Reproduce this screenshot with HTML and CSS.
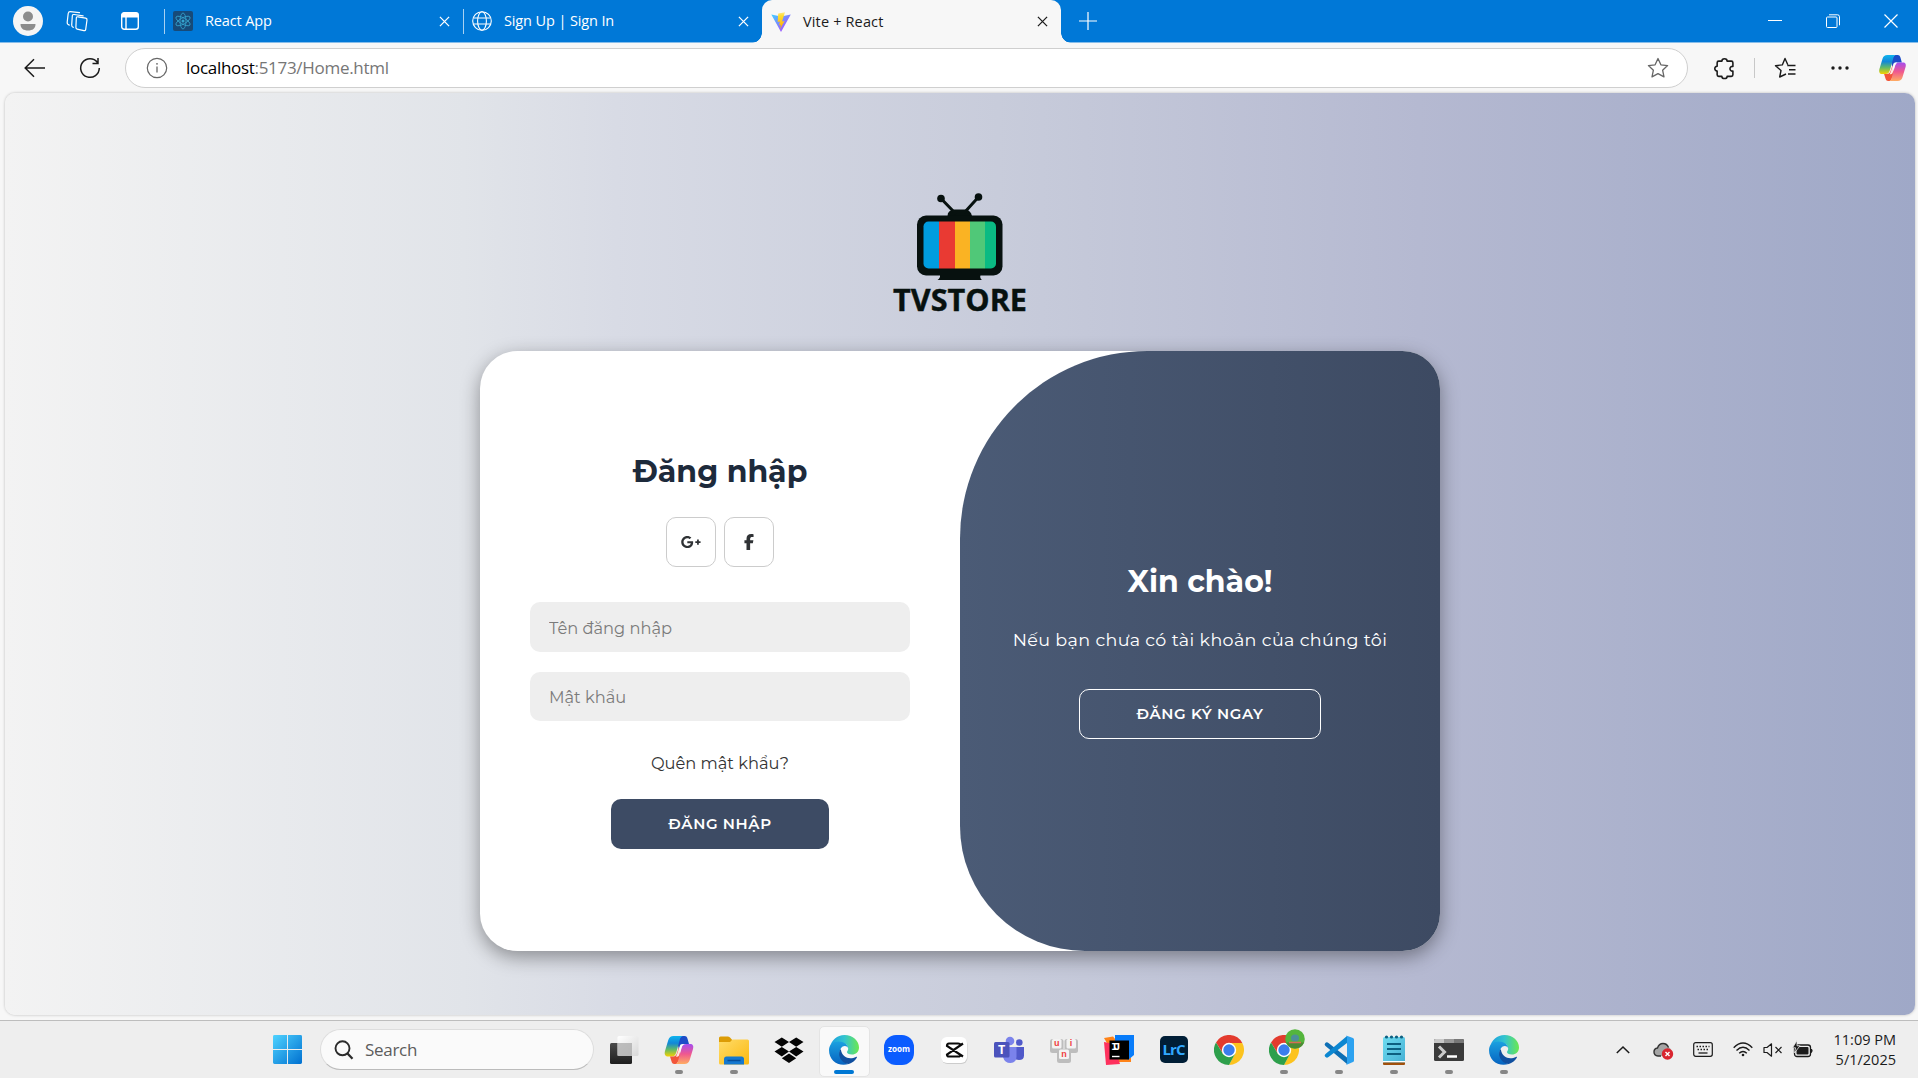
FILE: index.html
```html
<!DOCTYPE html>
<html lang="vi">
<head>
<meta charset="utf-8">
<title>Vite + React</title>
<link rel="stylesheet" href="styles.css">
</head>
<body>
<svg class="defs" aria-hidden="true">
  <defs>
    <linearGradient id="cpA" x1="0" y1="0" x2="0" y2="1"><stop offset="0" stop-color="#0fb5ee"/><stop offset=".35" stop-color="#1287d8"/><stop offset=".65" stop-color="#5fb96a"/><stop offset="1" stop-color="#f7d200"/></linearGradient>
    <linearGradient id="cpB" x1="0" y1="0" x2="0" y2="1"><stop offset="0" stop-color="#a44df0"/><stop offset=".5" stop-color="#f0588f"/><stop offset="1" stop-color="#ffad62"/></linearGradient>
    <linearGradient id="edA" x1="0" y1="0" x2="1" y2="0"><stop offset="0" stop-color="#1b9de2"/><stop offset=".5" stop-color="#33c4cf"/><stop offset="1" stop-color="#6be84f"/></linearGradient>
    <linearGradient id="edB" x1="0" y1="0" x2="0" y2="1"><stop offset="0" stop-color="#1ba0e0"/><stop offset="1" stop-color="#0663c0"/></linearGradient>
    <linearGradient id="winG" x1="0" y1="0" x2="1" y2="1"><stop offset="0" stop-color="#4fd3ff"/><stop offset="1" stop-color="#0070d0"/></linearGradient>
    <linearGradient id="viA" x1="0" y1="0" x2="1" y2="1"><stop offset="0" stop-color="#41d1ff"/><stop offset="1" stop-color="#bd34fe"/></linearGradient>
    <linearGradient id="viB" x1="0" y1="0" x2="0" y2="1"><stop offset="0" stop-color="#ffea83"/><stop offset=".2" stop-color="#ffdd35"/><stop offset="1" stop-color="#ffa800"/></linearGradient>
    <linearGradient id="foG" x1="0" y1="0" x2="1" y2="1"><stop offset="0" stop-color="#ffdc6a"/><stop offset="1" stop-color="#fbb910"/></linearGradient>
    <linearGradient id="noG" x1="0" y1="0" x2="1" y2="1"><stop offset="0" stop-color="#6fdcf0"/><stop offset="1" stop-color="#45b0d4"/></linearGradient>
    <linearGradient id="tvDark" x1="0" y1="0" x2="0" y2="1"><stop offset="0" stop-color="#4a4a4a"/><stop offset="1" stop-color="#1e1e1e"/></linearGradient>
    <linearGradient id="tvLite" x1="0" y1="0" x2="1" y2="1"><stop offset="0" stop-color="#fff"/><stop offset="1" stop-color="#d8d8d8"/></linearGradient>
    <symbol id="close" viewBox="0 0 12 12"><path d="M1 1l10 10M11 1L1 11" fill="none" stroke="currentColor" stroke-width="1.4"/></symbol>
    <symbol id="copilot" viewBox="0 0 30 30">
      <path d="M17.500 1h3c2 0 2.600 1.200 3.100 3L25 9h-5c-2.500 0-3.500 1-4.200 3.200L15 15 13 6z" fill="#1c4cc8"/>
      <path d="M9.500 1h9.500c-2 .3-2.600 1.500-3.100 3.300L12.400 17c-.9 3-2 4.500-4.900 4.500H4C1 21.500.2 19 1 16L4.300 5C5.200 2.200 6.700 1 9.500 1z" fill="url(#cpA)"/>
      <path d="M12.500 29h-2c-2 0-2.600-1.300-3.100-3L6 21.500h3c2.500 0 3.400-1.500 4.200-4L15 12l2 10z" fill="#f2553a"/>
      <path d="M20.500 29H11c2-.3 2.600-1.500 3.100-3.300L17.600 13c.9-3 2-4 4.900-4H26c3 0 3.800 2 3 5l-3.300 11c-.9 2.800-2.400 4-5.200 4z" fill="url(#cpB)"/>
      <path d="M16.200 9.800Q17.500 8.800 20 9q-1.800.8-2.500 3.500L15 20.500q-.8 1.500-3 1.200 .8-1.700 1.300-3.200z" fill="#fff" opacity=".85"/>
    </symbol>
    <symbol id="edge" viewBox="0 0 30 30">
      <path d="M1 12C2.500 5 8 0 15.500 0 24 0 30 6 30 12.500c0 4.500-3.300 7-7 7-3.500 0-5-1.300-5-2.500 0-.8 1.200-1.300 1.200-3.500C19.200 9 14 7.500 10 7.500 5.500 7.500 2.500 9.500 1 12z" fill="url(#edA)"/>
      <path d="M0 15C0 9.500 4.500 6.500 9.500 6.500c5.500 0 9.700 3.300 9.700 7-.2-1.400-1.600-2.500-3.400-2.500-3.200 0-5 3-5 6.500 0 6 4.500 10.500 9 11.500C9 32 0 25.500 0 15z" fill="url(#edB)"/>
      <path d="M11.800 14c-1.600 2-2 4.500-1.400 7 1 4.300 4.700 7.700 9.400 8 3.200-1 6-3.200 8-6.300.4-.7-.2-1.200-.9-.8-5.400 2.800-14 1.600-15.100-7.900z" fill="#104f9f"/>
    </symbol>
    <symbol id="chrome" viewBox="0 0 30 30">
      <path d="M15 8h13.300A15 15 0 0 1 15 30l6-11.500z" fill="#fcc31e"/>
      <path d="M2 7.500A15 15 0 0 1 28.300 8H15l-6.200 10.500z" fill="#e33b2e"/>
      <path d="M2 7.500l6.900 11.200L15 22l6.200-3.500L15 30A15 15 0 0 1 2 7.500z" fill="#2d9f4b"/>
      <circle cx="15" cy="15" r="7.200" fill="#fff"/><circle cx="15" cy="15" r="5.700" fill="#3b7ded"/>
    </symbol>
  </defs>
</svg>

<header class="tabstrip">
  <svg class="avatar" viewBox="0 0 30 30"><circle cx="15" cy="15" r="15" fill="#f5f5f5"/><circle cx="15" cy="10.500" r="5" fill="#8c8c8c"/><path d="M7.500 18h15c0 4.500-3 6.500-7.500 6.500S7.500 22.500 7.500 18z" fill="#8c8c8c"/></svg>
  <svg class="workspaces" viewBox="0 0 22 22" fill="none" stroke="#fff" stroke-width="1.200" stroke-linejoin="round" stroke-linecap="round"><path d="M10.300 8.200q0-1.700 1.700-1.400l7.700 1.400q1.500.3 1.300 1.800l-1.300 9.300q-.3 1.600-1.800 1.300l-6.800-1.500q-1.300-.3-1.200-1.800z"/><path d="M7.300 17.300q-1.700-.5-1.600-2.200L6.300 6q.1-1.700 1.800-1.500l9 1.300"/><path d="M3.300 15.200Q.9 14.500 1.200 12.200L2.200 3.500Q2.500 1.600 4.300 1.700L13.500 2.600"/></svg>
  <svg class="tabactions" viewBox="0 0 20 20"><rect x="1.700" y="1.700" width="16.600" height="16.600" rx="2.500" fill="none" stroke="#fff" stroke-width="1.400"/><path d="M1.500 6.500V4Q1.500 1.500 4 1.500h12q2.500 0 2.500 2.500v2.500z" fill="#fff"/><path d="M6 6v12" stroke="#fff" stroke-width="1.400"/></svg>
  <div class="tab">
    <svg class="favicon" viewBox="0 0 20 20"><rect width="20" height="20" rx="2" fill="#174a78"/><g fill="none" stroke="#35a5cf" stroke-width=".8"><ellipse cx="10" cy="10" rx="3" ry="8"/><ellipse cx="10" cy="10" rx="3" ry="8" transform="rotate(60 10 10)"/><ellipse cx="10" cy="10" rx="3" ry="8" transform="rotate(120 10 10)"/></g><circle cx="10" cy="10" r="1.500" fill="#35a5cf"/></svg>
    <span class="title">React App</span>
    <svg class="x"><use href="#close"/></svg>
  </div>
  <div class="tab">
    <svg class="favicon" viewBox="0 0 20 20" fill="none" stroke="#fff" stroke-width="1.100"><circle cx="10" cy="10" r="9.300"/><ellipse cx="10" cy="10" rx="4.400" ry="9.300"/><path d="M1.300 7h17.400M1.300 13h17.400"/></svg>
    <span class="title">Sign Up | Sign In</span>
    <svg class="x"><use href="#close"/></svg>
  </div>
  <div class="tab active">
    <svg class="favicon" viewBox="0 0 20 20"><path d="M.3 2.500L10 20 19.800 2.500 10 4.500z" fill="url(#viA)"/><path d="M14 .3L7.200 1.500l-.5 8.500 2.200-.4-.7 3.700 1.700-.4-.9 4.300 4.600-8.200-2.600.5z" fill="url(#viB)"/></svg>
    <span class="title">Vite + React</span>
    <svg class="x"><use href="#close"/></svg>
  </div>
  <svg class="newtab" viewBox="0 0 18 18"><path d="M9 0v18M0 9h18" stroke="#fff" stroke-width="1.200"/></svg>
  <div class="winbtns">
    <svg viewBox="0 0 14 14"><path d="M0 6.500h14" stroke="#fff"/></svg>
    <svg viewBox="0 0 14 14" fill="none" stroke="#fff"><rect x=".5" y="3" width="10.500" height="10.500" rx="1"/><path d="M3 .8h8.500q2 0 2 2v8.500"/></svg>
    <svg viewBox="0 0 14 14"><path d="M.5.500l13 13M13.500.500l-13 13" stroke="#fff" stroke-width="1.200"/></svg>
  </div>
</header>

<nav class="toolbar">
  <svg class="back" viewBox="0 0 22 20"><path d="M21 10H1.500M10 1.200L1.200 10l8.800 8.800" fill="none" stroke="#1b1b1b" stroke-width="1.500"/></svg>
  <svg class="reload" viewBox="0 0 22 22"><path d="M18.500 5.500A9.300 9.300 0 1 0 20.300 11M19 1v5.500h-5.500" fill="none" stroke="#1b1b1b" stroke-width="1.500"/></svg>
  <div class="address">
    <svg class="info" viewBox="0 0 22 22"><circle cx="11" cy="11" r="9.700" fill="none" stroke="#666" stroke-width="1.200"/><path d="M11 9.500v6" stroke="#666" stroke-width="1.300"/><circle cx="11" cy="6.800" r=".9" fill="#666"/></svg>
    <span class="url">localhost<span class="path">:5173/Home.html</span></span>
    <svg class="star" viewBox="0 0 22 22"><path d="M11 1.500l2.900 6.300 6.700.8-5 4.600 1.400 6.700L11 16.600l-6 3.300 1.400-6.700-5-4.600 6.700-.8z" fill="none" stroke="#666" stroke-width="1.300" stroke-linejoin="round"/></svg>
  </div>
  <svg class="puzzle" viewBox="0 0 20 20"><path d="M4.500 3h3c0-3 5-3 5 0h4q1.500 0 1.500 1.500V8c-3.700-.5-3.700 5 0 4.500v3.500q0 1.500-1.500 1.500h-4c0 2.800-5 2.800-5 0h-3Q3 17.500 3 16v-3.500c-3-.3-3-4.500 0-4.700V4.500Q3 3 4.500 3z" fill="none" stroke="#1b1b1b" stroke-width="1.500" stroke-linejoin="round"/></svg>
  <i class="vsep"></i>
  <svg class="favs" viewBox="0 0 22 22" fill="none" stroke="#1b1b1b" stroke-width="1.400" stroke-linejoin="round"><path d="M12 17l-6.300 3 1.300-6.500-5.500-4.800 6.800-.8L11 1.500l2.800 6.300"/><path d="M13.300 8.500h8.200M15 12.700h6.500M14 17h7.500"/></svg>
  <svg class="dots" viewBox="0 0 18 6" fill="#1b1b1b"><circle cx="2" cy="3" r="1.700"/><circle cx="9" cy="3" r="1.700"/><circle cx="16" cy="3" r="1.700"/></svg>
  <svg class="cp"><use href="#copilot"/></svg>
</nav>

<div class="viewport-frame">
<main class="page">
  <svg class="logo" viewBox="0 0 140 124" role="img" aria-label="TVSTORE">
    <g fill="#07110f"><circle cx="51" cy="6.500" r="3.800"/><circle cx="88.500" cy="5" r="3.800"/><path d="M57.500 24q0-6 7-6.500h11q5 .5 6.500 6.500z"/><rect x="27" y="23.500" width="85.500" height="60" rx="9"/><path d="M50 83h40.500q-1 3 1.500 5h-44.500q3-2 2.500-5z"/></g>
    <path d="M51 6.500L66 22M88.500 5L74 21" stroke="#07110f" stroke-width="3"/>
    <clipPath id="scr"><rect x="33.500" y="29.500" width="72.500" height="47" rx="5"/></clipPath>
    <g clip-path="url(#scr)"><path d="M33 29h16v48H33z" fill="#009de0"/><path d="M49 29h16v48H49z" fill="#e93a33"/><path d="M65 29h15v48H65z" fill="#fab323"/><path d="M80 29h15v48H80z" fill="#50c878"/><path d="M95 29h12v48H95z" fill="#0aba83"/></g>
    <text x="3" y="118.500" textLength="134" lengthAdjust="spacingAndGlyphs">TVSTORE</text>
  </svg>
  <section class="card">
    <form class="signin">
      <h1>Đăng nhập</h1>
      <div class="social">
        <a class="icon"><svg viewBox="0 0 640 512" width="20" height="16"><path fill="#2f3235" d="M386 228.500c2 10.700 3 21.500 3 32.500 0 111-74.500 190-187 190C94 451 7 364 7 256S94 61 202 61c52.700 0 96.700 19.300 130.700 51l-53 51C265 149 240 132 202 132c-67 0-121.500 55.500-121.500 124S135 380 202 380c77.500 0 106.500-55.500 111-84.500H202v-67zM570 230v-56h-56v56h-56v56h56v56h56v-56h56v-56z"/></svg></a>
        <a class="icon"><svg viewBox="0 0 320 512" width="10" height="16"><path fill="#2f3235" d="M80 299.300V512h116V299.300h86.500l18-97.800H196v-34.600c0-51.700 20.300-71.500 72.700-71.500 16.300 0 29.400.4 37 1.200V7.900C291.400 4 256.400 0 236.200 0 129.300 0 80 50.500 80 159.400v42.100H14v97.800z"/></svg></a>
      </div>
      <input class="field" type="text" placeholder="Tên đăng nhập">
      <input class="field second" type="password" placeholder="Mật khẩu">
      <a class="forgot">Quên mật khẩu?</a>
      <button type="button" class="submit">ĐĂNG NHẬP</button>
    </form>
    <aside class="welcome">
      <h1>Xin chào!</h1>
      <p>Nếu bạn chưa có tài khoản của chúng tôi</p>
      <button type="button" class="register">ĐĂNG KÝ NGAY</button>
    </aside>
  </section>
</main>
</div>

<footer class="taskbar">
  <svg class="start" viewBox="0 0 30 30"><path d="M0 1.500Q0 0 1.500 0h13v14.500H0zM15.500 0h13Q30 0 30 1.500v13H15.500zM0 15.500h14.500V30h-13Q0 30 0 28.500zM15.500 15.500H30v13q0 1.500-1.500 1.500h-13z" fill="url(#winG)"/></svg>
  <div class="search">
    <svg viewBox="0 0 20 20"><circle cx="8.500" cy="8.300" r="7" fill="none" stroke="#2b2b2b" stroke-width="1.900"/><path d="M13.500 13.500l5 5.200" stroke="#2b2b2b" stroke-width="2.300"/></svg>
    <span>Search</span>
  </div>
  <div class="apps">
    <div class="app"><svg viewBox="0 0 30 30"><rect x="1" y="8" width="22" height="21" rx="1.500" fill="url(#tvDark)"/><rect x="8.500" y="1" width="21" height="20" rx="1.500" fill="url(#tvLite)"/><path d="M8.500 8H23v13H8.500z" fill="#aaa" opacity=".75"/></svg></div>
    <div class="app run"><svg><use href="#copilot"/></svg></div>
    <div class="app run"><svg viewBox="0 0 30 30"><path d="M0 3Q0 1.500 1.500 1.500H9q1.500 0 2.500 1.500l1.500 1.700V9H0z" fill="#dc9c06"/><path d="M0 7h11l2.500-2.500h15Q30 4.500 30 6v22q0 1.500-1.500 1.500h-27Q0 29.500 0 28z" fill="url(#foG)"/><path d="M5 29.500V24q0-2.500 2.500-2.500h15Q25 21.500 25 24v5.500z" fill="#1578cf"/><path d="M8.500 25.500h13" stroke="#064d99" stroke-width="1.500"/></svg></div>
    <div class="app"><svg viewBox="0 0 30 30" fill="#050505"><path d="M7.800 2.500L15 7l-7.200 4.800L.5 7zM22.200 2.500L29.500 7l-7.300 4.800L15 7zM7.800 12L15 16.600l-7.200 4.800L.5 16.600zM22.200 12l7.300 4.600-7.300 4.800L15 16.600zM15 18.500l7.200 4.700L15 28l-7.200-4.800z"/></svg></div>
    <div class="app current"><svg><use href="#edge"/></svg></div>
    <div class="app"><svg viewBox="0 0 30 30"><rect width="30" height="30" rx="12" fill="#0b5cff"/><text x="4" y="17.300" class="t-zoom" textLength="22" lengthAdjust="spacingAndGlyphs">zoom</text></svg></div>
    <div class="app"><svg viewBox="0 0 30 30"><rect x="2.500" y="3.500" width="26" height="25.500" rx="6" fill="#ccc"/><rect x="2" y="2" width="26" height="26" rx="6" fill="#fff"/><path d="M24 8.500L8 19.500q0 2 2 2h9q2.500 0 2.500-2M24 21.500L8 11q0-2.500 2-2.500h9q2.500 0 2.500 2.500" fill="none" stroke="#0a0a0a" stroke-width="2.200"/></svg></div>
    <div class="app"><svg viewBox="0 0 30 30"><circle cx="16" cy="6" r="4.300" fill="#7b83eb"/><circle cx="25.300" cy="7.500" r="3.300" fill="#5059c9"/><path d="M19 12h11v8.500q0 4.500-5 4.500t-6-4z" fill="#5059c9"/><path d="M11 12h11.500v9.500q0 6.500-6 6.500T9 22z" fill="#7b83eb"/><rect y="7" width="15.500" height="15.500" rx="1.500" fill="#4b53bc"/><text x="4" y="19.300" class="t-teams">T</text></svg></div>
    <div class="app"><svg viewBox="0 0 30 30"><g fill="#bdbdbd"><rect x="1" y="4" width="13.500" height="14" rx="2.500"/><rect x="15.500" y="4" width="13.500" height="14" rx="2.500"/><rect x="8" y="14" width="14" height="14" rx="2.500"/></g><g fill="#f3f3f3"><rect x="3" y="4" width="9.500" height="9.500" rx="1.500"/><rect x="17.500" y="4" width="9.500" height="9.500" rx="1.500"/><rect x="10" y="14.500" width="10" height="9.500" rx="1.500"/></g><g class="t-key"><text x="5" y="11">u</text><text x="20.700" y="11">i</text><text x="12.200" y="21.500">n</text></g></svg></div>
    <div class="app"><svg viewBox="0 0 30 30"><path d="M0 3l9-1.500L27 23v4H14z" fill="#ff8318"/><path d="M0 7l10 2 6 20-14 1z" fill="#fe315d"/><path d="M11 0h19v20l-6 5L11 8z" fill="#087cfa"/><rect x="5.500" y="5.500" width="19.500" height="19" fill="#000"/><text x="7.300" y="15.200" class="t-ij" textLength="9">IJ</text><path d="M8 21.500h7.500" stroke="#fff" stroke-width="1.400"/></svg></div>
    <div class="app"><svg viewBox="0 0 30 30"><rect x="1" y="1" width="28" height="27" rx="5" fill="#001e36"/><text x="3.500" y="19.500" class="t-lrc" textLength="23">LrC</text></svg></div>
    <div class="app"><svg><use href="#chrome"/></svg></div>
    <div class="app run"><svg><use href="#chrome"/></svg><svg class="badge" viewBox="0 0 20 20"><circle cx="10" cy="10" r="9.800" fill="#54b53c"/><path d="M1 13.500h18A9.800 9.800 0 0 1 1 13.500z" fill="#4c8a34"/><ellipse cx="10" cy="9" rx="4" ry="3.500" fill="#4c8f98"/><path d="M4 13.500h12" stroke="#d86d55" stroke-width="1.500"/></svg></div>
    <div class="app run"><svg viewBox="0 0 30 30"><path d="M1 8.500q1.500-2 3.500-.5L23 22.500V29L1.500 11q-1.500-1.200-.5-2.500z" fill="#0d6fb5"/><path d="M1 21.500q1.500 2 3.500.5L23 8V1L1.500 19q-1.500 1.200-.5 2.500z" fill="#0c87d1"/><path d="M22 .5L29 3q1 .5 1 1.500v21q0 1-1 1.500l-7 3q1-1 1-2.500v-25Q23 1 22 .5z" fill="#2da2f0"/></svg></div>
    <div class="app run"><svg viewBox="0 0 30 30"><rect x="4" y="2" width="22" height="26" rx="1.500" fill="url(#noG)"/><path d="M4 26h22v1.500H4z" fill="#fff"/><path d="M4 27.500h22V29q0 1-1 1H5q-1 0-1-1z" fill="#a0500c"/><path d="M8 9h14M8 14h14M8 19h14" stroke="#0d5f80" stroke-width="1.800"/><g fill="#0d5f80"><circle cx="7.500" cy="2" r="1.600"/><circle cx="12.500" cy="2" r="1.600"/><circle cx="17.500" cy="2" r="1.600"/><circle cx="22.500" cy="2" r="1.600"/></g></svg></div>
    <div class="app run"><svg viewBox="0 0 30 30"><rect y="4" width="30" height="22" rx="1.500" fill="#3a3a3a"/><path d="M0 8V5.500Q0 4 1.500 4H10v4z" fill="#c8c8c8"/><path d="M10 4h10v4H10z" fill="#999"/><path d="M20 4h8.500Q30 4 30 5.500V8H20z" fill="#777"/><path d="M5 11.500l5.500 5.500L5 22.500" fill="none" stroke="#ccc" stroke-width="3"/><path d="M13 21.500h10" stroke="#fff" stroke-width="2.500"/></svg></div>
    <div class="app run"><svg><use href="#edge"/></svg></div>
  </div>
  <div class="tray">
    <svg class="chev" viewBox="0 0 14 8"><path d="M.8 7L7 1l6.200 6" fill="none" stroke="#1b1b1b" stroke-width="1.500"/></svg>
    <svg class="cloud" viewBox="0 0 20 18"><path d="M5 15q-4-.5-4-4 0-3.500 3.500-4Q6 2.500 10 2.500t5.500 3.500q2.500 1 2.500 4v5z" fill="#a5a5a5"/><path d="M8 15H5q-4-.5-4-4 0-3.500 3.500-4Q6 2.500 10 2.500t5.500 4" fill="none" stroke="#333" stroke-width="1.400"/><circle cx="14.500" cy="13" r="5.700" fill="#d9252f"/><path d="M12.500 11l4 4M16.500 11l-4 4" stroke="#fff" stroke-width="1.400"/></svg>
    <svg class="kbd" viewBox="0 0 20 15"><rect x=".7" y=".7" width="18.600" height="13.600" rx="2" fill="none" stroke="#1b1b1b" stroke-width="1.200"/><path d="M3.500 4.500h13M4.500 7.500h12" stroke="#1b1b1b" stroke-width="1.500" stroke-dasharray="1.500 1.500"/><path d="M5.500 11h9" stroke="#1b1b1b" stroke-width="1.300"/></svg>
    <svg class="wifi" viewBox="0 0 20 15" fill="none" stroke="#1b1b1b" stroke-width="1.400"><path d="M.7 5.700q9.300-9.400 18.600 0M3.500 8.500q6.500-6.400 13 0M6.200 11.300q3.800-3.600 7.600 0"/><circle cx="10" cy="13" r="1.300" fill="#1b1b1b" stroke="none"/></svg>
    <svg class="vol" viewBox="0 0 20 14" fill="none" stroke="#1b1b1b" stroke-width="1.200"><path d="M1 4.500h3L8.500.8v12.400L4 9.500H1z" stroke-linejoin="round"/><path d="M12.500 4l6 6M18.500 4l-6 6"/></svg>
    <svg class="bat" viewBox="0 0 20 17"><rect x="1.500" y="4" width="16" height="11.500" rx="2.500" fill="none" stroke="#1b1b1b" stroke-width="1.300"/><rect x="3.500" y="6" width="12" height="7.500" rx="1" fill="#1b1b1b"/><path d="M18.500 8q1.300 1.700 0 3.500z" fill="#1b1b1b" stroke="#1b1b1b"/><path d="M4-.500L-.5 6.800h3l-1 5 5.500-7H4z" fill="#1b1b1b" stroke="#eee" stroke-width=".8"/></svg>
    <div class="clock"><span>11:09 PM</span><span>5/1/2025</span></div>
  </div>
</footer>
</body>
</html>
```
FILE: styles.css
```css
* { box-sizing: border-box; }
body {
  margin: 0;
  width: 1918px;
  height: 1078px;
  overflow: hidden;
  display: flex;
  flex-direction: column;
  background: #f7f7f7;
  font-family: "Segoe UI", "Open Sans", "Noto Sans", sans-serif;
  color: #1b1b1b;
}
svg { display: block; flex: none; overflow: visible; }
.defs { position: absolute; width: 0; height: 0; }

/* Tab strip */
.tabstrip {
  height: 43px;
  flex: none;
  display: flex;
  align-items: center;
  padding-left: 13px;
  background: #0078d7;
  border-bottom: 1px solid #86bdea;
}
.avatar { width: 30px; height: 30px; }
.workspaces { width: 22px; height: 22px; margin-left: 23px; }
.tabactions { width: 20px; height: 20px; margin-left: 32px; }
.tab {
  display: flex;
  align-items: center;
  width: 299px;
  height: 42px;
  padding: 0 13px 0 9px;
  color: #fff;
  font-size: 14.500px;
  position: relative;
}
.tab:not(.active)::before {
  content: "";
  width: 1px;
  height: 25px;
  margin: 0 8px 0 -9px;
  background: #a8d1f2;
}
.tabactions + .tab { margin-left: 24px; }
.favicon { width: 20px; height: 20px; margin-right: 12px; }
.title { margin-bottom: 1px; letter-spacing: -.12px; }
.active .title { letter-spacing: .15px; }
.x { width: 11px; height: 11px; margin-left: auto; }
.tab.active {
  height: 43px;
  margin-bottom: -1px;
  background: #f7f7f7;
  color: #1b1b1b;
  border-radius: 10px 10px 0 0;
}
.tab.active::before, .tab.active::after {
  content: "";
  position: absolute;
  bottom: 0;
  width: 10px;
  height: 10px;
}
.tab.active::before { left: -10px; background: radial-gradient(circle at 0 0, transparent 9.500px, #f7f7f7 10px); }
.tab.active::after { right: -10px; background: radial-gradient(circle at 100% 0, transparent 9.500px, #f7f7f7 10px); }
.newtab { width: 18px; height: 18px; margin-left: 18px; }
.winbtns { display: flex; gap: 44px; margin: 0 20px 0 auto; }
.winbtns svg { width: 14px; height: 14px; }

/* Toolbar */
.toolbar {
  height: 50px;
  flex: none;
  display: flex;
  align-items: center;
  padding-left: 24px;
}
.back { width: 22px; height: 20px; }
.reload { width: 22px; height: 22px; margin-left: 33px; }
.address {
  display: flex;
  align-items: center;
  width: 1563px;
  height: 40px;
  margin-left: 24px;
  padding: 0 18px 0 20px;
  background: #fff;
  border: 1px solid #cfcfcf;
  border-radius: 20px;
}
.info { width: 22px; height: 22px; }
.url { margin: 0 0 2px 18px; font-size: 17px; letter-spacing: -.3px; color: #000; }
.path { color: #767676; }
.star { width: 22px; height: 22px; margin-left: auto; }
.puzzle { width: 21px; height: 21px; margin-left: 26px; }
.vsep { width: 1px; height: 20px; margin-left: 19px; background: #c8c8c8; }
.favs { width: 22px; height: 22px; margin-left: 19px; }
.dots { width: 18px; height: 6px; margin-left: 35px; }
.cp { width: 29px; height: 28px; margin-left: 29px; }

/* Web page */
.viewport-frame {
  height: 927px;
  flex: none;
  padding: 0 3px 5px 5px;
}
.page {
  height: 922px;
  display: flex;
  flex-direction: column;
  align-items: center;
  padding-top: 99px;
  border-radius: 10px;
  background: linear-gradient(to right, #f3f3f3, #e1e4e9 24%, #d8dbe5 32%, #c8ccdb 52%, #b5b9d1 74%, #9fa8c7);
  box-shadow: 0 0 3px rgba(0, 0, 0, .25);
  font-family: Montserrat, Inter, sans-serif;
}
.logo { width: 140px; height: 124px; }
.logo text { font: 700 30.500px "Open Sans", sans-serif; fill: #07110f; stroke: #07110f; stroke-width: .4px; }
.card {
  width: 960px;
  height: 600px;
  margin-top: 35px;
  display: flex;
  background: #fff;
  border-radius: 37.500px;
  overflow: hidden;
  box-shadow: 0 6px 19px rgba(0, 0, 0, .38);
}
.signin, .welcome {
  width: 480px;
  display: flex;
  flex-direction: column;
  align-items: center;
}
.signin { padding: 101px 50px 0; color: #333; }
h1 { margin: 0; height: 40px; line-height: 40px; font-size: 30px; font-weight: 700; }
.signin h1 { color: #1d2a3b; }
.social { display: flex; gap: 8px; margin-top: 25px; }
.icon {
  width: 50px;
  height: 50px;
  display: flex;
  align-items: center;
  justify-content: center;
  border: 1px solid #ccc;
  border-radius: 10px;
}
.field {
  width: 380px;
  height: 50px;
  margin: 35px 0 0;
  padding: 1px 19px 0;
  border: 0;
  background: #eee;
  border-radius: 10px;
  font: 400 16.250px Montserrat, Inter, sans-serif;
}
.field::placeholder { color: #7b7b7b; }
.field.second { margin-top: 20px; height: 49px; }
.forgot { height: 24px; margin-top: 30px; line-height: 24px; font-size: 16.250px; }
button {
  display: block;
  height: 50px;
  padding: 0 0 2px;
  border-radius: 10px;
  color: #fff;
  font: 600 15px Montserrat, Inter, sans-serif;
  letter-spacing: .6px;
}
.submit { width: 218px; margin-top: 24px; background: #3d4b64; border: 0; }
.welcome {
  padding-top: 211px;
  color: #fff;
  background: linear-gradient(to right, #4b5b76, #3d4a62);
  border-radius: 187.500px 0 0 125px;
}
.welcome p { margin: 24px 0 0; height: 28px; line-height: 28px; font-size: 17.500px; letter-spacing: .375px; }
.register { width: 242px; margin-top: 35px; background: transparent; border: 1px solid #fff; }

/* Taskbar */
.taskbar {
  height: 58px;
  flex: none;
  display: flex;
  align-items: center;
  padding-left: 273px;
  background: #eee;
  border-top: 1px solid #bdbdbd;
}
.start { width: 29px; height: 29px; }
.search {
  width: 274px;
  height: 41px;
  margin-left: 18px;
  padding-left: 13px;
  display: flex;
  align-items: center;
  gap: 11px;
  background: #fafafa;
  border: 1px solid #ddd;
  border-bottom-color: #bbb;
  border-radius: 21px;
  font-size: 17px;
  letter-spacing: -.3px;
  color: #5c5c5c;
}
.search svg { width: 20px; height: 20px; }
.apps { display: flex; margin-left: 2px; }
.app {
  position: relative;
  width: 55px;
  height: 57px;
  display: flex;
  align-items: center;
  justify-content: center;
}
.app svg { width: 30px; height: 30px; }
.app.run::after, .app.current::after {
  content: "";
  position: absolute;
  bottom: 4px;
  width: 8px;
  height: 4px;
  border-radius: 2px;
  background: #868686;
}
.app.current::after { width: 20px; background: #0078d4; }
.app.current::before {
  content: "";
  position: absolute;
  top: 5px;
  left: 3px;
  width: 49px;
  height: 49px;
  border-radius: 5px;
  background: #f9f9f9;
  border: 1px solid #e4e4e4;
}
.app.current svg { position: relative; }
.app .badge { position: absolute; width: 20px; height: 20px; left: 29px; top: 8px; }
.t-zoom { font: 700 8.500px "Open Sans", sans-serif; fill: #fff; }
.t-teams { font: 700 12.500px "Open Sans", sans-serif; fill: #fff; }
.t-key { font: 700 9px "Liberation Sans", sans-serif; fill: #f04040; }
.t-ij { font: 700 11px "Liberation Mono", monospace; fill: #fff; }
.t-lrc { font: 700 15px "Open Sans", sans-serif; fill: #31a8ff; }
.tray { display: flex; align-items: center; margin: 0 22px 0 auto; }
.chev { width: 14px; height: 8px; }
.cloud { width: 20px; height: 18px; margin-left: 23px; }
.kbd { width: 20px; height: 15px; margin-left: 20px; }
.wifi { width: 20px; height: 15px; margin-left: 20px; }
.vol { width: 20px; height: 14px; margin-left: 10px; }
.bat { width: 20px; height: 17px; margin-left: 10px; }
.clock {
  width: 83px;
  display: flex;
  flex-direction: column;
  align-items: flex-end;
  font-size: 14.500px;
  line-height: 20px;
}
```
